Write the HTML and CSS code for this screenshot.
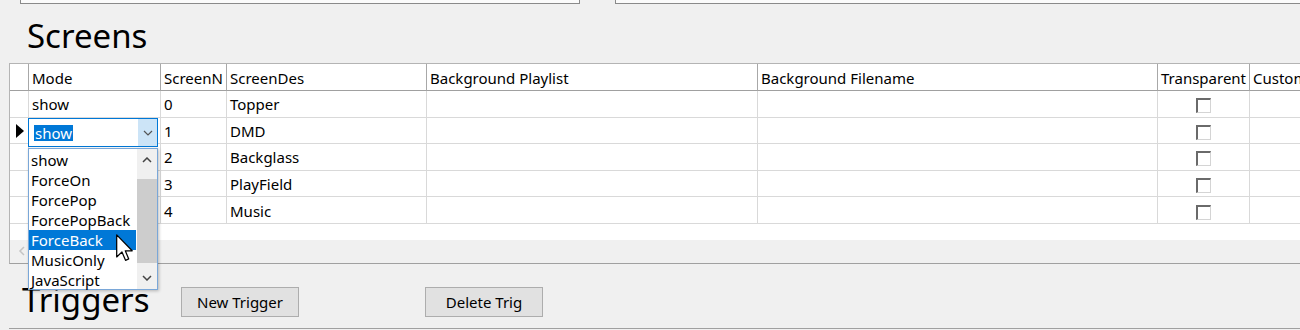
FILE: index.html
```html
<!DOCTYPE html>
<html lang="en">
<head>
    <meta charset="UTF-8">
    <title>Screens</title>
    <link rel="stylesheet" href="styles.css">
</head>
<body>
    <div class="page">
        <div class="topbar">
            <div class="field field-left"></div>
            <div class="field field-right"></div>
        </div>

        <h2 class="section-title">Screens</h2>

        <div class="grid">
            <table class="screens">
                <thead>
                    <tr>
                        <th class="rowhead"></th>
                        <th class="c-mode">Mode</th>
                        <th class="c-num">ScreenN</th>
                        <th class="c-des">ScreenDes</th>
                        <th class="c-pl">Background Playlist</th>
                        <th class="c-fn">Background Filename</th>
                        <th class="c-tr">Transparent</th>
                        <th class="c-cu">Custom</th>
                    </tr>
                </thead>
                <tbody>
                    <tr>
                        <td class="rowhead"></td>
                        <td>show</td>
                        <td>0</td>
                        <td>Topper</td>
                        <td></td>
                        <td></td>
                        <td class="check"><span class="box"></span></td>
                        <td></td>
                    </tr>
                    <tr>
                        <td class="rowhead"><span class="current"></span></td>
                        <td></td>
                        <td>1</td>
                        <td>DMD</td>
                        <td></td>
                        <td></td>
                        <td class="check"><span class="box"></span></td>
                        <td></td>
                    </tr>
                    <tr>
                        <td class="rowhead"></td>
                        <td></td>
                        <td>2</td>
                        <td>Backglass</td>
                        <td></td>
                        <td></td>
                        <td class="check"><span class="box"></span></td>
                        <td></td>
                    </tr>
                    <tr>
                        <td class="rowhead"></td>
                        <td></td>
                        <td>3</td>
                        <td>PlayField</td>
                        <td></td>
                        <td></td>
                        <td class="check"><span class="box"></span></td>
                        <td></td>
                    </tr>
                    <tr>
                        <td class="rowhead"></td>
                        <td></td>
                        <td>4</td>
                        <td>Music</td>
                        <td></td>
                        <td></td>
                        <td class="check"><span class="box"></span></td>
                        <td></td>
                    </tr>
                </tbody>
            </table>
            <div class="grid-fill"></div>
            <div class="hscroll">
                <svg class="hscroll-left" width="8" height="10" viewBox="0 0 8 10"><polyline points="6,1 2,5 6,9" fill="none" stroke="#c4c4c4" stroke-width="1.5"/></svg>
            </div>
        </div>

        <div class="triggers">
            <h2 class="section-title trig-title">Triggers</h2>
            <button class="btn">New Trigger</button>
            <button class="btn btn-delete">Delete Trig</button>
        </div>
        <div class="trigger-grid"></div>

        <!-- editor of the current cell -->
        <div class="combo">
            <span class="combo-text"><span class="sel">show</span></span>
            <span class="combo-btn">
                <svg width="10" height="6" viewBox="0 0 10 6"><polyline points="1,1 5,5 9,1" fill="none" stroke="#555" stroke-width="1.2"/></svg>
            </span>
        </div>

        <div class="dropdown">
            <ul class="options">
                <li>show</li>
                <li>ForceOn</li>
                <li>ForcePop</li>
                <li>ForcePopBack</li>
                <li class="hot">ForceBack</li>
                <li>MusicOnly</li>
                <li>JavaScript</li>
            </ul>
            <div class="vscroll">
                <svg class="arrow" width="10" height="6" viewBox="0 0 10 6"><polyline points="1,5 5,1 9,5" fill="none" stroke="#444" stroke-width="1.5"/></svg>
                <div class="thumb"></div>
                <svg class="arrow" width="10" height="6" viewBox="0 0 10 6"><polyline points="1,1 5,5 9,1" fill="none" stroke="#444" stroke-width="1.5"/></svg>
            </div>
        </div>

        <svg class="cursor" width="18" height="28" viewBox="0 0 13 20">
            <path d="M0.5 0.5 L0.5 16.5 L4.3 12.9 L6.9 18.9 L9.2 17.9 L6.7 12 L11.7 12 Z" fill="#fff" stroke="#000" stroke-width="0.9" stroke-linejoin="round"/>
        </svg>
    </div>
</body>
</html>
```

FILE: styles.css
```css
html, body {
    margin: 0;
    padding: 0;
    overflow: hidden;
}

body {
    background-color: #f0f0f0;
    font-family: "Noto Sans", "Open Sans", sans-serif;
    font-size: 15px;
    color: #000;
}

.page {
    position: relative;
    width: 1300px;
    height: 330px;
}

/* text boxes cut off at the top */
.topbar {
    display: flex;
    height: 4px;
}

.field {
    height: 3px;
    border: 1px solid #8a8a8a;
    border-top: none;
    background-color: #fbfbfb;
}

.field-left {
    margin-left: 20px;
    width: 558px;
}

.field-right {
    margin-left: 35px;
    flex: 1;
    margin-right: -10px;
}

.section-title {
    margin: 12px 0 7px 27px;
    font-size: 33px;
    line-height: 40px;
    font-weight: 400;
    height: 40px;
}

/* grid */
.grid {
    margin-left: 9px;
    width: 1400px;
    border: 1px solid #b4b4b4;
    border-bottom-color: #a0a0a0;
    background-color: #fff;
}

.screens {
    border-collapse: separate;
    border-spacing: 0;
    table-layout: fixed;
    width: 1360px;
}

.screens th,
.screens td {
    box-sizing: border-box;
    padding: 1px 0 0 3px;
    text-align: left;
    white-space: nowrap;
    overflow: hidden;
    font-weight: 400;
    border-right: 1px solid #d9d9d9;
    border-bottom: 1px solid #d9d9d9;
}

.screens th {
    height: 27px;
    border-bottom: 1px solid #a0a0a0;
    border-right-color: #a8a8a8;
}

.screens td {
    height: 26.6px;
}

.screens .rowhead {
    width: 19px;
    padding: 0;
    position: relative;
}

.c-mode { width: 132px; }
.c-num { width: 66px; }
.c-des { width: 200px; }
.c-pl { width: 331px; }
.c-fn { width: 400px; }
.c-tr { width: 92px; }
.c-cu { width: 140px; }

.current {
    position: absolute;
    left: 6px;
    top: 6px;
    width: 0;
    height: 0;
    border-top: 7px solid transparent;
    border-bottom: 7px solid transparent;
    border-left: 8px solid #000;
}

.screens td.check {
    text-align: center;
    padding: 0;
}

.box {
    display: inline-block;
    box-sizing: border-box;
    width: 15px;
    height: 15px;
    vertical-align: middle;
    background-color: #fff;
    border-top: 2px solid #6a6a6a;
    border-left: 2px solid #6a6a6a;
    border-right: 1px solid #d4d4d4;
    border-bottom: 1px solid #d4d4d4;
}

.grid-fill {
    height: 16px;
}

.hscroll {
    height: 23px;
    background-color: #f0f0f0;
    display: flex;
    align-items: center;
    padding-left: 8px;
}

/* triggers */
.triggers {
    display: flex;
    align-items: flex-start;
    height: 64px;
    padding-left: 22px;
}

.trig-title {
    margin: 16px 0 0 0;
    width: 159px;
    flex: none;
}

.btn {
    margin-top: 23px;
    width: 118px;
    height: 30px;
    padding: 0;
    font-family: inherit;
    font-size: 15px;
    color: #000;
    background-color: #e1e1e1;
    border: 1px solid #adadad;
}

.btn-delete {
    margin-left: 126px;
}

.trigger-grid {
    margin-left: 9px;
    height: 2px;
    border-top: 1px solid #a0a0a0;
}

/* open combo box */
.combo {
    position: absolute;
    left: 28px;
    top: 118px;
    width: 130px;
    height: 29px;
    box-sizing: border-box;
    border: 1px solid #0078d7;
    background-color: #fff;
    display: flex;
}

.combo-text {
    flex: 1;
    padding-left: 5px;
    display: flex;
    align-items: center;
}

.sel {
    background-color: #0078d7;
    color: #fff;
    line-height: 16px;
    padding: 0 1px;
}

.combo-btn {
    width: 19px;
    background-color: #cce4f7;
    display: flex;
    align-items: center;
    justify-content: center;
}

.dropdown {
    position: absolute;
    left: 28px;
    top: 148px;
    width: 130px;
    height: 142px;
    box-sizing: border-box;
    border: 1px solid #7aa7d8;
    background-color: #fff;
    display: flex;
    box-shadow: 1px 1px 3px rgba(0, 0, 0, 0.25);
}

.options {
    list-style: none;
    margin: 0;
    padding: 1px 0 0 0;
    flex: 1;
}

.options li {
    height: 20px;
    line-height: 20px;
    padding-left: 2px;
    white-space: nowrap;
}

.options li.hot {
    background-color: #0078d7;
    color: #fff;
}

.vscroll {
    width: 20px;
    margin-left: 1px;
    background-color: #f0f0f0;
    display: flex;
    flex-direction: column;
    align-items: center;
}

.vscroll .arrow {
    margin: 8px 0;
}

.thumb {
    width: 20px;
    height: 84px;
    margin-top: 8px;
    margin-bottom: auto;
    background-color: #cdcdcd;
}

.cursor {
    position: absolute;
    left: 116px;
    top: 234px;
}
```
